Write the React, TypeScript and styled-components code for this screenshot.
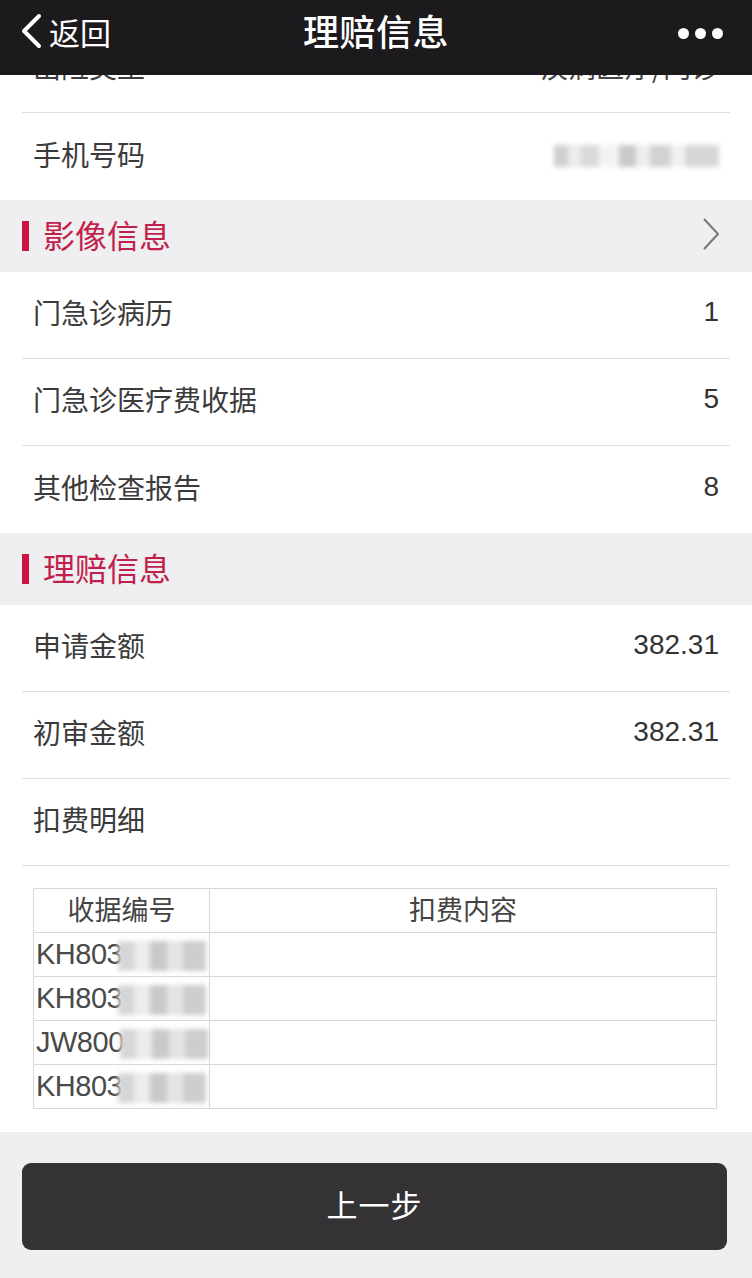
import React from "react";
import styled, { createGlobalStyle } from "styled-components";

const Global = createGlobalStyle`
  html, body { margin: 0; padding: 0; background: #ffffff; }
  body { font-family: "Noto Sans CJK SC", "Noto Sans", sans-serif; -webkit-font-smoothing: antialiased; }
`;

const Page = styled.div`
  width: 752px;
  min-height: 1278px;
  background: #ffffff;
  display: flex;
  flex-direction: column;
  padding-top: 26px;
  box-sizing: border-box;
`;

const NavBar = styled.header`
  position: fixed;
  top: 0;
  left: 0;
  width: 752px;
  height: 75px;
  background: #1c1a1d;
  z-index: 10;
  display: flex;
  align-items: center;
  justify-content: center;
`;

const Back = styled.div`
  position: absolute;
  left: 20px;
  top: 0;
  height: 62px;
  display: flex;
  align-items: center;
  gap: 7px;
  color: #ffffff;
  font-size: 31px;
`;

const Title = styled.h1`
  margin: 0 0 15px;
  color: #ffffff;
  font-size: 36px;
  font-weight: 500;
  letter-spacing: 0.5px;
`;

const Dots = styled.div`
  position: absolute;
  right: 29px;
  top: 28px;
  display: flex;
  gap: 6px;
`;

const Dot = styled.span`
  width: 11px;
  height: 11px;
  border-radius: 50%;
  background: #ffffff;
`;

const Row = styled.div<{ $last?: boolean }>`
  height: 87px;
  margin: 0 22px;
  padding: 0 11px 6px;
  display: flex;
  align-items: center;
  justify-content: space-between;
  border-bottom: ${(p) => (p.$last ? "none" : "1px solid #dedede")};
  box-sizing: border-box;
  color: #3b3b3b;
  font-size: 28px;
`;

const Value = styled.span`
  font-family: "Liberation Sans", "Noto Sans CJK SC", sans-serif;
  color: #333333;
  font-size: 28px;
`;

const TypeValue = styled.span`
  color: #444;
  font-size: 28px;
`;

const Blurred = styled.span`
  display: inline-block;
  width: 172px;
  height: 22px;
  margin-top: 4px;
  filter: blur(2.5px);
  background: linear-gradient(
    90deg,
    #ffffff 0 4%,
    #cfcfcf 4% 12%,
    #ececec 12% 20%,
    #dadada 20% 30%,
    #f3f3f3 30% 42%,
    #c9c9c9 42% 52%,
    #ededed 52% 60%,
    #d2d2d2 60% 72%,
    #f1f1f1 72% 80%,
    #d6d6d6 80% 100%
  );
`;

const Section = styled.div`
  height: 72px;
  background: #efeef0;
  display: flex;
  align-items: center;
  padding: 0 32px 5px 22px;
  box-sizing: border-box;
  gap: 14px;
`;

const Bar = styled.span`
  width: 7px;
  height: 30px;
  margin-top: 4px;
  background: #cc1546;
`;

const SectionTitle = styled.span`
  flex: 1;
  color: #c21f4c;
  font-size: 32px;
`;

const TableWrap = styled.div`
  padding: 22px 35px 23px 33px;
  background: #ffffff;
`;

const Table = styled.table`
  width: 100%;
  border-collapse: collapse;
  color: #444;
  font-size: 27px;
  td, th {
    border: 1px solid #d8d8d8;
    height: 44px;
    padding: 0;
    box-sizing: border-box;
  }
  th {
    font-weight: 400;
    text-align: center;
    padding-bottom: 4px;
  }
`;

const HeadId = styled.th`
  width: 176px;
`;

const IdCell = styled.td`
  width: 176px;
  font-family: "Liberation Sans", sans-serif;
  font-size: 29px;
  color: #4a4a4a;
  white-space: nowrap;
`;

const IdText = styled.span`
  padding-left: 2px;
  letter-spacing: -0.5px;
`;

const Masked = styled.span`
  display: inline-block;
  width: 88px;
  height: 30px;
  vertical-align: middle;
  margin-left: -4px;
  filter: blur(2.5px);
  background: linear-gradient(
    90deg,
    #d6d6d6 0 18%,
    #ececec 18% 36%,
    #c9c9c9 36% 56%,
    #e4e4e4 56% 74%,
    #cdcdcd 74% 100%
  );
`;

const Footer = styled.div`
  flex: 1;
  background: #efeef0;
  padding: 31px 25px 28px 22px;
`;

const Button = styled.button`
  width: 100%;
  height: 87px;
  border: none;
  border-radius: 9px;
  background: #353236;
  color: #ffffff;
  font-family: "Noto Sans CJK SC", sans-serif;
  font-size: 31px;
  letter-spacing: 1px;
  padding: 0 0 6px;
`;

const rows1 = [
  ["门急诊病历", "1"],
  ["门急诊医疗费收据", "5"],
  ["其他检查报告", "8"],
];

const ids = ["KH803", "KH803", "JW800", "KH803"];

export default function App() {
  return (
    <>
      <Global />
      <NavBar>
        <Back>
          <svg width="22" height="36" viewBox="0 0 22 36">
            <path d="M19 3 L4 18 L19 33" fill="none" stroke="#fff" strokeWidth="4" strokeLinecap="round" strokeLinejoin="round" />
          </svg>
          <span>返回</span>
        </Back>
        <Title>理赔信息</Title>
        <Dots>
          <Dot />
          <Dot />
          <Dot />
        </Dots>
      </NavBar>
      <Page>
        <Row>
          <span>出险类型</span>
          <TypeValue>疾病医疗/门诊</TypeValue>
        </Row>
        <Row $last>
          <span>手机号码</span>
          <Blurred />
        </Row>
        <Section>
          <Bar />
          <SectionTitle>影像信息</SectionTitle>
          <svg width="18" height="34" viewBox="0 0 18 34">
            <path d="M2 2 L16 17 L2 32" fill="none" stroke="#777" strokeWidth="2" strokeLinejoin="round" />
          </svg>
        </Section>
        {rows1.map(([l, v], i) => (
          <Row key={l} $last={i === rows1.length - 1}>
            <span>{l}</span>
            <Value>{v}</Value>
          </Row>
        ))}
        <Section>
          <Bar />
          <SectionTitle>理赔信息</SectionTitle>
        </Section>
        <Row>
          <span>申请金额</span>
          <Value>382.31</Value>
        </Row>
        <Row>
          <span>初审金额</span>
          <Value>382.31</Value>
        </Row>
        <Row>
          <span>扣费明细</span>
        </Row>
        <TableWrap>
          <Table>
            <thead>
              <tr>
                <HeadId>收据编号</HeadId>
                <th>扣费内容</th>
              </tr>
            </thead>
            <tbody>
              {ids.map((id, i) => (
                <tr key={i}>
                  <IdCell>
                    <IdText>{id}</IdText>
                    <Masked />
                  </IdCell>
                  <td></td>
                </tr>
              ))}
            </tbody>
          </Table>
        </TableWrap>
        <Footer>
          <Button>上一步</Button>
        </Footer>
      </Page>
    </>
  );
}
